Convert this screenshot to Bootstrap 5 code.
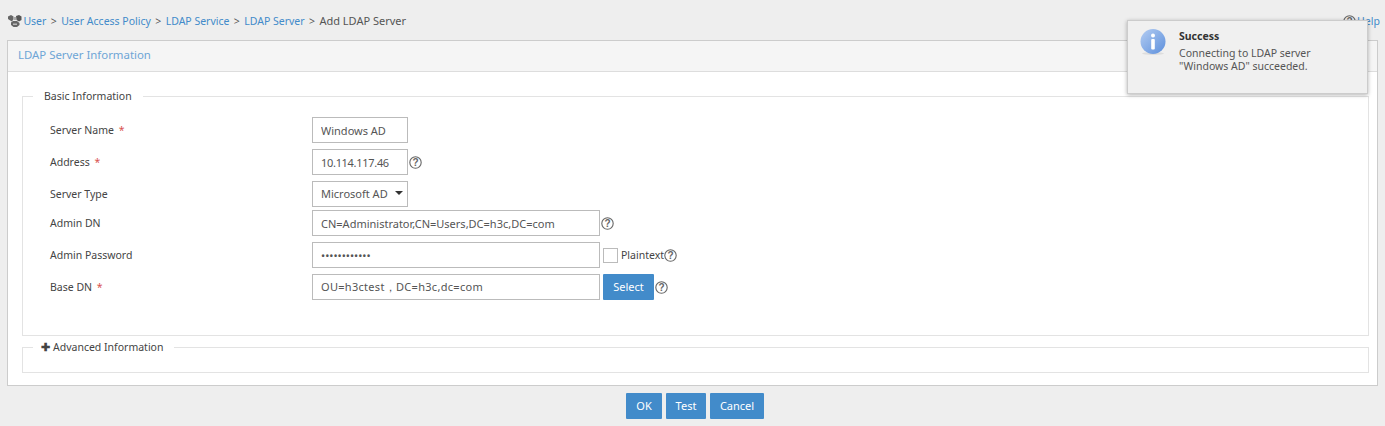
<!DOCTYPE html>
<html lang="en">
<head>
<meta charset="utf-8">
<title>Add LDAP Server</title>
<link href="https://cdn.jsdelivr.net/npm/bootstrap@5.3.0/dist/css/bootstrap.min.css" rel="stylesheet">
<style>
html,body{height:426px;overflow:hidden}
body{background:#eee;font-family:"Noto Sans","Open Sans",sans-serif;font-size:10.5px;color:#444;line-height:16px;position:relative}
a{color:#428bca;text-decoration:none}
.crumbbar{height:40px;padding:13px 7px 0 7px;align-items:flex-start}
.crumbs{gap:4.4px;color:#555}
.crumbicon{margin-right:-4px;flex:none}
.crumb-now{font-size:11px}
.helplink{position:absolute;left:1343px;top:13px;gap:1px}
.sheet{margin:0 7px;height:346px;background:#fff;border:1px solid #ccc}
.sheet-head{height:31px;background:#f5f5f5;border-bottom:1px solid #ddd;padding:6px 10px;font-size:11.4px;color:#6ea5d6}
.sheet-body{padding:0 8px 0 14px}
.legendbox{border:1px solid #e3e3e3;position:relative}
.legendtext{position:absolute;top:-9px;left:10px;background:#fff;padding:0 11px;color:#444}
.legendtext-adv{padding-left:8px}
.box-main{margin-top:24px;height:240px;padding-top:20px}
.box-adv{margin-top:11px;height:26px}
.formrow{display:flex;align-items:center;height:26px}
.gap6{margin-bottom:6px}
.gap3{margin-bottom:3px}
.fieldlabel{width:289px;padding-left:27px;flex:none}
.req{color:#d9534f;margin-left:2px}
.txtbox{height:26px;border:1px solid #bbb;background:#fff;padding:0 8px;font-family:inherit;font-size:11px;color:#555;outline:0;border-radius:0}
.w-s{width:96px}
.w-l{width:288px}
.txt-narrow{letter-spacing:-.3px}
.txt-wide{letter-spacing:.3px}
.selbox{width:96px;height:26px;border:1px solid #bbb;display:flex;align-items:center;justify-content:space-between;padding:0 4px 0 8px;font-size:11px;color:#555}
.caretmark{width:0;height:0;border-left:4px solid transparent;border-right:4px solid transparent;border-top:4px solid #333;margin-top:-3px}
.hint{flex:none;margin-left:1px}
.hint-tight{margin-left:0}
.tick{width:15px;height:15px;border:1px solid #bbb;margin:0 3px;flex:none;-webkit-appearance:none;appearance:none;background:#fff}
.actionbtn{height:26px;border:0;border-radius:1px;background:#428bca;color:#fff;font-size:11px;line-height:26px;padding:0;--bs-btn-hover-bg:#428bca}
.btn-select{width:51px;margin-left:3px}
.btn-ok{width:36px}.btn-test{width:40px}.btn-cancel{width:54px}
.actions{margin-top:7px;gap:4px;padding-left:5px}
.notice{position:absolute;left:1127px;top:20px;width:241px;height:74px;background:#f0f0f0;border:1px solid #ccc;box-shadow:0 1px 4px rgba(0,0,0,.3);padding:8px 12px;display:flex}
.notice-icon{flex:none;margin-right:13px}
.notice-title{font-weight:700;color:#333;margin-bottom:4px;line-height:14px}
.notice-msg{color:#555;line-height:13px}
.plusmark{font-weight:700;margin-right:3px;font-size:11px;line-height:14px;color:#444}
</style>
</head>
<body>
<div class="crumbbar d-flex crumbs">
  <svg class="crumbicon" width="16" height="16" viewBox="0 0 16 16" aria-hidden="true"><path d="M1 3.5 4 2l2.5 1.5V6L5 8.5 4 8 1 6z" fill="#666"/><path d="M9 3l3-1 2.500 1.500V7L12 8.500 9.500 7z" fill="#555"/><path d="M4 9.500l2-1.500h4l2.500 2V12L10 14H6.500L4 12z" fill="#666"/><path d="M6.500 4h2.500v3H6.500z" fill="#aaa"/><path d="M6 10.500h4v1.500H6z" fill="#bbb"/></svg>
  <a href="#">User</a><span>&gt;</span><a href="#">User Access Policy</a><span>&gt;</span><a href="#">LDAP Service</a><span>&gt;</span><a href="#">LDAP Server</a><span>&gt;</span><span class="crumb-now">Add LDAP Server</span>
</div>
<a href="#" class="helplink d-flex align-items-center">
  <svg width="13" height="13" viewBox="0 0 13 13" aria-hidden="true"><circle cx="6.500" cy="6.500" r="5.700" fill="none" stroke="#666" stroke-width="1.100"/><text x="6.500" y="10" text-anchor="middle" font-size="10" font-weight="700" fill="#666" font-family="Liberation Sans">?</text></svg><span>Help</span>
</a>

<div class="sheet">
  <div class="sheet-head">LDAP Server Information</div>
  <div class="sheet-body">
    <div class="legendbox box-main">
      <div class="legendtext">Basic Information</div>
      <div class="formrow gap6"><div class="fieldlabel">Server Name <span class="req">*</span></div><input class="txtbox w-s" value="Windows AD"></div>
      <div class="formrow gap6"><div class="fieldlabel">Address <span class="req">*</span></div><input class="txtbox w-s txt-narrow" value="10.114.117.46">
        <svg class="hint" width="13" height="13" viewBox="0 0 13 13" aria-hidden="true"><circle cx="6.500" cy="6.500" r="5.700" fill="none" stroke="#666" stroke-width="1.100"/><text x="6.500" y="10" text-anchor="middle" font-size="10" font-weight="700" fill="#666" font-family="Liberation Sans">?</text></svg></div>
      <div class="formrow gap3"><div class="fieldlabel">Server Type</div><div class="selbox"><span>Microsoft AD</span><span class="caretmark"></span></div></div>
      <div class="formrow gap6"><div class="fieldlabel">Admin DN</div><input class="txtbox w-l" value="CN=Administrator,CN=Users,DC=h3c,DC=com">
        <svg class="hint" width="13" height="13" viewBox="0 0 13 13" aria-hidden="true"><circle cx="6.500" cy="6.500" r="5.700" fill="none" stroke="#666" stroke-width="1.100"/><text x="6.500" y="10" text-anchor="middle" font-size="10" font-weight="700" fill="#666" font-family="Liberation Sans">?</text></svg></div>
      <div class="formrow gap6"><div class="fieldlabel">Admin Password</div><input class="txtbox w-l" type="password" value="............">
        <input type="checkbox" class="tick"><span>Plaintext</span>
        <svg class="hint hint-tight" width="13" height="13" viewBox="0 0 13 13" aria-hidden="true"><circle cx="6.500" cy="6.500" r="5.700" fill="none" stroke="#666" stroke-width="1.100"/><text x="6.500" y="10" text-anchor="middle" font-size="10" font-weight="700" fill="#666" font-family="Liberation Sans">?</text></svg></div>
      <div class="formrow"><div class="fieldlabel">Base DN <span class="req">*</span></div><input class="txtbox w-l txt-wide" value="OU=h3ctest，DC=h3c,dc=com"><button class="btn actionbtn btn-select" type="button">Select</button>
        <svg class="hint" width="13" height="13" viewBox="0 0 13 13" aria-hidden="true"><circle cx="6.500" cy="6.500" r="5.700" fill="none" stroke="#666" stroke-width="1.100"/><text x="6.500" y="10" text-anchor="middle" font-size="10" font-weight="700" fill="#666" font-family="Liberation Sans">?</text></svg></div>
    </div>
    <div class="legendbox box-adv">
      <div class="legendtext legendtext-adv d-flex align-items-center"><span class="plusmark">✚</span>Advanced Information</div>
    </div>
  </div>
</div>

<div class="d-flex justify-content-center actions">
  <button class="btn actionbtn btn-ok" type="button">OK</button>
  <button class="btn actionbtn btn-test" type="button">Test</button>
  <button class="btn actionbtn btn-cancel" type="button">Cancel</button>
</div>

<div class="notice">
  <svg class="notice-icon" width="26" height="27" viewBox="0 0 26 27" aria-hidden="true"><defs><linearGradient id="ig" x1="0" y1="0" x2="1" y2="1"><stop offset="0" stop-color="#b4cdf2"/><stop offset="1" stop-color="#5c8fdc"/></linearGradient></defs><ellipse cx="13" cy="24.500" rx="11" ry="1.500" fill="#ddd"/><circle cx="13" cy="12.500" r="12.500" fill="url(#ig)"/><circle cx="13" cy="6.500" r="2" fill="#fff"/><rect x="11.200" y="10" width="3.600" height="10.500" rx="1" fill="#fff"/></svg>
  <div>
    <div class="notice-title">Success</div>
    <div class="notice-msg">Connecting to LDAP server<br>"Windows AD" succeeded.</div>
  </div>
</div>
</body>
</html>
